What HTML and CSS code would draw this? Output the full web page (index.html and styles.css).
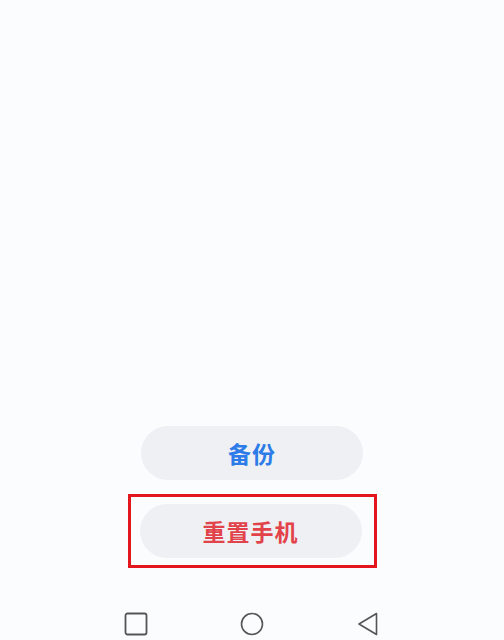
FILE: index.html
```html
<!DOCTYPE html>
<html>
  <head>
    <meta charset="utf-8">
    <link rel="stylesheet" href="styles.css">
  </head>
  <body>
    <div class="screen">
      <div class="actions">
        <button class="pill backup">备份</button>
        <div class="highlight">
          <button class="pill reset">重置手机</button>
        </div>
      </div>
      <nav class="navbar">
        <svg width="24" height="24" viewBox="0 0 24 24">
          <rect x="1.5" y="1.5" width="21" height="21" rx="2" fill="none" stroke="#555" stroke-width="1.8"/>
        </svg>
        <svg width="24" height="24" viewBox="0 0 24 24">
          <circle cx="12" cy="12" r="10.5" fill="none" stroke="#555" stroke-width="1.6"/>
        </svg>
        <svg width="24" height="24" viewBox="0 0 24 24">
          <path d="M20.5 1.5 L3 12 L20.5 22.5 Z" fill="none" stroke="#555" stroke-width="1.6" stroke-linejoin="round"/>
        </svg>
      </nav>
    </div>
  </body>
</html>
```

FILE: styles.css
```css
body {
  margin: 0;
  background: #fbfcfe;
  font-family: "Noto Sans CJK SC", "Noto Sans", sans-serif;
}
.screen {
  height: 640px;
  display: flex;
  flex-direction: column;
  align-items: center;
}
.actions {
  margin-top: auto;
  display: flex;
  flex-direction: column;
  align-items: center;
}
.pill {
  width: 222px;
  height: 54px;
  border: none;
  border-radius: 27px;
  background: #eef0f3;
  font-family: inherit;
  font-size: 23px;
  font-weight: 700;
  letter-spacing: 1px;
  padding: 0;
  cursor: pointer;
}
.backup {
  color: #2c7be8;
  margin-bottom: 14px;
}
.reset {
  color: #e2434a;
}
.highlight {
  border: 3px solid #e3161e;
  padding: 7px 12px 7px 9px;
}
.navbar {
  width: 348px;
  height: 72px;
  display: grid;
  grid-template-columns: repeat(3, 116px);
  justify-items: center;
  align-items: center;
}
.navbar svg {
  margin-top: 40px;
}
```
